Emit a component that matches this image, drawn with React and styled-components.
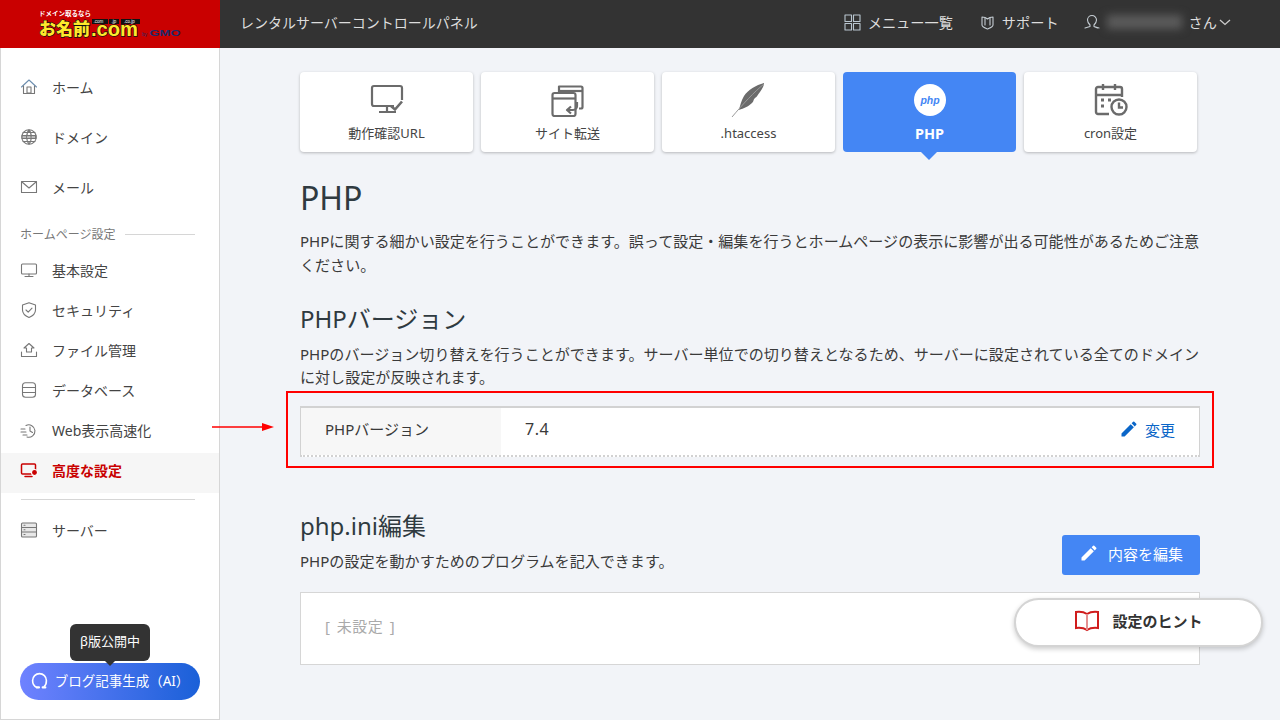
import React from "react";
import styled, { createGlobalStyle } from "styled-components";

const GlobalStyle = createGlobalStyle`
  html, body {
    margin: 0;
    padding: 0;
    height: 720px;
    overflow: hidden;
    background: #f2f4f8;
    color: #333;
    font-family: "Noto Sans", "Noto Sans CJK JP", sans-serif;
  }
  * { box-sizing: border-box; }
`;

const Page = styled.div`
  display: grid;
  grid-template-columns: 220px 1fr;
  grid-template-rows: 48px 672px;
  width: 1280px;
  height: 720px;
`;

const LogoBox = styled.div`
  background: #c90000;
`;

const Header = styled.header`
  display: flex;
  align-items: center;
  background: #333;
  color: #ddd;
  padding: 0 49px 0 20px;
`;

const HeaderTitle = styled.div`
  flex: 1;
  font-size: 14px;
  padding-bottom: 4px;
`;

const HeaderLink = styled.div`
  display: flex;
  align-items: center;
  gap: 7px;
  font-size: 14.2px;
  padding-bottom: 4px;
  margin-left: ${(p) => p.$gap || 0}px;
`;

const Blurred = styled.span`
  display: block;
  width: 75px;
  height: 14px;
  background: #5c5c5c;
  filter: blur(4px);
`;

const Chevron = styled.svg`
  margin-left: -5px;
`;

const Sidebar = styled.aside`
  position: relative;
  display: flex;
  flex-direction: column;
  background: #fff;
  border-left: 1px solid #d6d6d6;
  border-right: 1px solid #d6d6d6;
  border-bottom: 1px solid #d6d6d6;
  height: 672px;
  padding-top: 15px;
`;

const NavItem = styled.div`
  display: flex;
  align-items: center;
  gap: 14px;
  height: ${(p) => p.$h || 40}px;
  padding-left: 19px;
  padding-bottom: ${(p) => (p.$active ? 6 : 2)}px;
  margin-top: ${(p) => (p.$active ? 2 : 0)}px;
  font-size: 14px;
  color: ${(p) => (p.$active ? "#c90000" : "#444")};
  font-weight: ${(p) => (p.$active ? 700 : 400)};
  background: ${(p) => (p.$active ? "#f6f6f6" : "transparent")};
`;

const SectionLabel = styled.div`
  display: flex;
  align-items: center;
  gap: 10px;
  height: 20px;
  margin: 11px 24px 7px 19px;
  font-size: 12px;
  color: #777;
  &::after {
    content: "";
    flex: 1;
    height: 1px;
    background: #d6d6d6;
  }
`;

const Divider = styled.div`
  height: 1px;
  margin: 6px 24px 11px 20px;
  background: #d6d6d6;
`;

const SideFoot = styled.div`
  position: relative;
  margin: auto 19px 19px;
`;

const BlogButton = styled.div`
  display: flex;
  align-items: center;
  justify-content: center;
  gap: 7px;
  height: 37px;
  padding-bottom: 3px;
  border-radius: 19px;
  color: #fff;
  font-size: 13.5px;
  background: linear-gradient(90deg, #6f82ff, #1a60d8);
`;

const Tip = styled.div`
  position: absolute;
  left: 50px;
  top: -39px;
  width: 80px;
  height: 37px;
  padding-bottom: 4px;
  display: flex;
  align-items: center;
  justify-content: center;
  border-radius: 6px;
  background: #333;
  color: #fff;
  font-size: 13px;
  &::after {
    content: "";
    position: absolute;
    left: 34px;
    bottom: -5px;
    border: 6px solid transparent;
    border-bottom: 0;
    border-top-color: #333;
  }
`;

const Main = styled.main`
  position: relative;
  padding: 24px 80px 0;
  height: 672px;
`;

const Tabs = styled.div`
  display: flex;
  gap: 8px;
`;

const Tab = styled.div`
  position: relative;
  display: flex;
  flex-direction: column;
  align-items: center;
  width: 173px;
  height: 80px;
  padding-top: 11px;
  border-radius: 4px;
  font-size: ${(p) => (p.$active ? 14.5 : 13)}px;
  font-weight: ${(p) => (p.$active ? 700 : 400)};
  color: ${(p) => (p.$active ? "#fff" : "#444")};
  background: ${(p) => (p.$active ? "#4486f4" : "#fff")};
  box-shadow: ${(p) => (p.$active ? "none" : "0 1px 3px rgba(0, 0, 0, 0.25)")};
  ${(p) =>
    p.$active &&
    `&::after {
      content: "";
      position: absolute;
      left: 78px;
      bottom: -8px;
      border: 8px solid transparent;
      border-bottom: 0;
      border-top-color: #4486f4;
    }`}
`;

const TabIcon = styled.div`
  height: 34px;
  margin-bottom: 6px;
`;

const TabLabel = styled.div`
  line-height: 20px;
`;

const PageTitle = styled.h1`
  margin: 23px 0 0;
  font-size: 32px;
  line-height: 46px;
  font-weight: 400;
  color: #2f3a40;
`;

const Text = styled.p`
  margin: ${(p) => p.$top || 0}px 0 0;
  font-size: 15.05px;
  line-height: ${(p) => p.$lh || 24}px;
  color: #3a3a3a;
`;

const SubTitle = styled.h2`
  margin: ${(p) => p.$top || 0}px 0 0;
  font-size: 24px;
  line-height: 34px;
  font-weight: 400;
  color: #2f3a40;
`;

const Highlight = styled.div`
  margin: 2px -14px 0;
  padding: 13px 12px 9px;
  border: 2px solid #f00;
`;

const Arrow = styled.svg`
  position: absolute;
  left: -8px;
  top: 373px;
`;

const VersionTable = styled.div`
  display: grid;
  grid-template-columns: 200px 1fr auto;
  align-items: center;
  height: 51px;
  background: #fff;
  border: 1px solid #d2d2d2;
  border-top-width: 2px;
  border-bottom: 2px dotted #d2d2d2;
  font-size: 15px;
  color: #3a3a3a;
`;

const VersionHead = styled.div`
  display: flex;
  align-items: center;
  height: 100%;
  padding: 0 0 7px 24px;
  background: #f7f7f7;
`;

const VersionValue = styled.div`
  padding: 0 0 5px 24px;
  font-size: 16px;
  letter-spacing: 0.5px;
`;

const ChangeLink = styled.div`
  display: flex;
  align-items: center;
  gap: 6px;
  padding: 0 24px 5px 0;
  color: #0a66c8;
`;

const IniHead = styled.div`
  display: flex;
  justify-content: space-between;
  align-items: flex-end;
  margin-top: 41px;
`;

const EditButton = styled.div`
  display: flex;
  align-items: center;
  justify-content: center;
  gap: 9px;
  width: 138px;
  height: 40px;
  margin-bottom: -2px;
  padding-bottom: 4px;
  border-radius: 3px;
  background: #4486f4;
  color: #fff;
  font-size: 15px;
`;

const IniBox = styled.div`
  display: flex;
  align-items: center;
  height: 73px;
  margin-top: 19px;
  padding: 0 0 7px 24px;
  background: #fff;
  border: 1px solid #d6d6d6;
  font-size: 15px;
  letter-spacing: 0.5px;
  word-spacing: 2px;
  color: #aaa;
`;

const HintButton = styled.div`
  position: absolute;
  left: 794px;
  top: 550px;
  display: flex;
  align-items: center;
  justify-content: center;
  gap: 12px;
  width: 249px;
  height: 49px;
  padding-bottom: 4px;
  border-radius: 25px;
  background: #fff;
  border: 2px solid #d4d4d4;
  box-shadow: 0 2px 5px rgba(0, 0, 0, 0.2);
  font-size: 15px;
  font-weight: 700;
  color: #333;
`;

const Logo = () => (
  <svg width="220" height="48" viewBox="0 0 220 48">
    <text x="39" y="16" fontSize="6.500" fontWeight="700" fill="#fff" fontFamily="Noto Sans CJK JP">
      ドメイン取るなら
    </text>
    <text x="39" y="35" fontSize="17" fontWeight="900" fill="#ffe92b" stroke="#111" strokeWidth="1.300" paintOrder="stroke" fontFamily="Noto Sans CJK JP" textLength="51">
      お名前
    </text>
    <text x="91" y="36" fontSize="20" fontWeight="700" fill="#ffe92b" stroke="#111" strokeWidth="1.300" paintOrder="stroke" fontFamily="Liberation Sans" textLength="47" lengthAdjust="spacingAndGlyphs">
      .com
    </text>
    <rect x="92" y="19" width="16" height="5" fill="#111" />
    <rect x="109" y="19" width="10" height="5" fill="#111" />
    <rect x="121" y="19" width="19" height="5" fill="#111" />
    <text x="93.500" y="23" fontSize="4.500" fill="#fff" fontFamily="Liberation Sans">.com</text>
    <text x="111.500" y="23" fontSize="4.500" fill="#fff" fontFamily="Liberation Sans">.jp</text>
    <text x="124" y="23" fontSize="4.500" fill="#fff" fontFamily="Liberation Sans">.co.jp</text>
    <text x="142" y="36" fontSize="5" fill="#1b2a6b" fontFamily="Liberation Sans">by</text>
    <text x="149.500" y="36" fontSize="9" fontWeight="700" fill="#1b2a6b" fontFamily="Liberation Sans" textLength="31" lengthAdjust="spacingAndGlyphs">GMO</text>
  </svg>
);

const Ico = ({ size = 18, color = "#777", width = 1.1, children, view = 18 }) => (
  <svg
    width={size}
    height={size}
    viewBox={`0 0 ${view} ${view}`}
    fill="none"
    stroke={color}
    strokeWidth={width}
    strokeLinejoin="round"
    strokeLinecap="round"
  >
    {children}
  </svg>
);

const sideIcons = {
  home: (
    <>
      <path d="M1.500 9 9 2l7.500 7" stroke="#6d8fb0" />
      <path d="M3.500 8v7.500h11V8" />
      <rect x="7" y="9" width="4" height="6" />
    </>
  ),
  domain: (
    <>
      <circle cx="9" cy="9" r="7.200" />
      <path d="M3 4.500h12M3 13.500h12M9 2c-3 3-3 11 0 14M9 2c3 3 3 11 0 14" />
      <rect x="1.500" y="7" width="15" height="4" fill="#777" stroke="none" />
      <path d="M3 9h3M7.500 9h3M12 9h3" stroke="#fff" strokeDasharray="1 .6" />
    </>
  ),
  mail: (
    <>
      <rect x="1.500" y="3.500" width="15" height="11" />
      <path d="m2 4 7 6 7-6" />
    </>
  ),
  desktop: (
    <>
      <rect x="1.500" y="3" width="15" height="10" rx="1" />
      <path d="M9 13v2.500M5 15.500h8" />
    </>
  ),
  shield: (
    <>
      <path d="M9 1.800 15.500 4v5c0 3.800-3 6-6.500 7.400C5.500 15 2.500 12.800 2.500 9V4z" />
      <path d="m6 9 2.200 2.200L12 7.200" />
    </>
  ),
  upload: (
    <>
      <path d="M9 2.500 14 7h-2.500v4h-5V7H4z" />
      <path d="M1.500 11v4.500h15V11" />
    </>
  ),
  database: (
    <>
      <rect x="2.500" y="1.800" width="13" height="14.400" rx="3" />
      <path d="M2.500 6.500h13M2.500 11.500h13" />
    </>
  ),
  speed: (
    <>
      <path d="M6 4.500A6.200 6.200 0 1 1 7 16" />
      <path d="M10 6v4l2.500 1.500M1 8h4M1 11h5M3 14h4" />
    </>
  ),
  advanced: (
    <>
      <rect x="1.500" y="3" width="14" height="10" rx="1" strokeWidth="1.500" />
      <path d="M5 15.500h7" strokeWidth="1.500" />
      <circle cx="14.500" cy="11.500" r="3" fill="#c90000" stroke="#fff" />
    </>
  ),
  server: (
    <>
      <rect x="1.500" y="2" width="15" height="14" rx="1" fill="#e8e8e8" />
      <path d="M1.500 6.500h15M1.500 11h15M4 4.300h1M4 8.800h1M4 13.500h1" />
    </>
  ),
};

const SideItem = ({ icon, label, active, h }) => (
  <NavItem $active={active} $h={h}>
    <Ico color={active ? "#c90000" : "#777"}>{sideIcons[icon]}</Ico>
    {label}
  </NavItem>
);

const tabIcons = {
  url: (
    <svg width="36" height="34" viewBox="0 0 36 34" fill="none" stroke="#6b6b6b" strokeWidth="2.200">
      <path d="M25 23H5a2 2 0 0 1-2-2V5a2 2 0 0 1 2-2h26a2 2 0 0 1 2 2v12" />
      <path d="M18 23v5M10 29h17" />
      <path d="m22 23 4 3.500 7-8" strokeWidth="2.600" />
    </svg>
  ),
  redirect: (
    <svg width="36" height="34" viewBox="0 0 36 34" fill="none" stroke="#6b6b6b" strokeWidth="2.200" strokeLinejoin="round">
      <path d="M9 9V3.500h22a1.500 1.500 0 0 1 1.500 1.500v19a1.500 1.500 0 0 1-1.500 1.500h-2" />
      <path d="M9 8h23" />
      <rect x="2.500" y="10" width="23" height="23" rx="2" />
      <path d="M2.500 15.500h23" />
      <path d="M27 19v4a4 4 0 0 1-4 4h-5M21 23.500 17 27l4 3.500" />
    </svg>
  ),
  feather: (
    <svg width="36" height="34" viewBox="0 0 36 34">
      <path d="M33 0c-8 2-16 7-20 13-3 5-4 10-5 14 5-2 9-3 13-7 2-2 1-3 3-5 2-1 3-4 5-6 2-3 4-6 4-9z" fill="#6b6b6b" />
      <path d="M33 1C23 9 12 21 1 34" stroke="#9a9a9a" strokeWidth="1" fill="none" />
    </svg>
  ),
  php: (
    <svg width="36" height="34" viewBox="0 0 36 34">
      <circle cx="18" cy="17" r="16" fill="#fff" />
      <text x="18" y="20.500" textAnchor="middle" fontSize="10.500" fontStyle="italic" fontWeight="700" fill="#4486f4" fontFamily="Liberation Sans">
        php
      </text>
    </svg>
  ),
  cron: (
    <svg width="36" height="34" viewBox="0 0 36 34" fill="none" stroke="#6b6b6b" strokeWidth="2.400">
      <path d="M16 31H5a2 2 0 0 1-2-2V6a2 2 0 0 1 2-2h22a2 2 0 0 1 2 2v8" />
      <path d="M3 12h26M10 1v6M22 1v6" />
      <path d="M8 17h3M15 17h3M8 23h3" strokeWidth="3" />
      <circle cx="26" cy="24" r="7.500" />
      <path d="M26 19.500V24.500h4" />
    </svg>
  ),
};

const Pencil = ({ color, size = 18 }) => (
  <svg width={size} height={size} viewBox="0 0 24 24" fill={color}>
    <path d="M3 17.250V21h3.750L17.810 9.940l-3.750-3.750L3 17.250zM20.710 7.040a1 1 0 0 0 0-1.410l-2.340-2.340a1 1 0 0 0-1.410 0l-1.830 1.830 3.750 3.750 1.830-1.830z" />
  </svg>
);

const App = () => (
  <Page>
    <GlobalStyle />
    <LogoBox>
      <Logo />
    </LogoBox>
    <Header>
      <HeaderTitle>レンタルサーバーコントロールパネル</HeaderTitle>
      <HeaderLink>
        <Ico size={17} color="#b9c6d0" view={17}>
          <rect x="1" y="1" width="6.500" height="6.500" />
          <rect x="9.500" y="1" width="6.500" height="6.500" />
          <rect x="1" y="9.500" width="6.500" height="6.500" />
          <rect x="9.500" y="9.500" width="6.500" height="6.500" />
        </Ico>
        メニュー一覧
      </HeaderLink>
      <HeaderLink $gap={27}>
        <Ico size={15} color="#c5cdd3" view={15}>
          <path d="M2 2c2 0 4 .5 5.500 2C9 2.500 11 2 13 2v8c0 2-3 3-5.500 4C5 13 2 12 2 10z" />
          <path d="M5 3v7M10 3v7" />
        </Ico>
        サポート
      </HeaderLink>
      <HeaderLink $gap={25}>
        <Ico size={16} color="#c5cdd3" view={16}>
          <path d="M6 11C4 9 3.500 7.500 3.500 6a4.500 4.500 0 0 1 9 0c0 1.500-.5 3-2.500 5v1.500l3.500 1.500M6 11v1.500L1 14M10 12.500 15 14" />
        </Ico>
        <Blurred />
        <span>さん</span>
        <Chevron width="12" height="7" viewBox="0 0 12 7" fill="none" stroke="#ccc" strokeWidth="1.300">
          <path d="m1 1 5 4.500L11 1" />
        </Chevron>
      </HeaderLink>
    </Header>

    <Sidebar>
      <SideItem icon="home" label="ホーム" h={50} />
      <SideItem icon="domain" label="ドメイン" h={50} />
      <SideItem icon="mail" label="メール" h={50} />
      <SectionLabel>ホームページ設定</SectionLabel>
      <SideItem icon="desktop" label="基本設定" />
      <SideItem icon="shield" label="セキュリティ" />
      <SideItem icon="upload" label="ファイル管理" />
      <SideItem icon="database" label="データベース" />
      <SideItem icon="speed" label="Web表示高速化" />
      <SideItem icon="advanced" label="高度な設定" active />
      <Divider />
      <SideItem icon="server" label="サーバー" />
      <SideFoot>
        <Tip>β版公開中</Tip>
        <BlogButton>
          <Ico size={17} color="#fff" view={16} width={1.500}>
            <path d="M5.500 14.500C3 13.500 1.500 11 1.500 8a6.500 6.500 0 0 1 13 0c0 2.500-.7 4.500-2 5.500" />
            <path d="M5.500 14.500h2M11 14.500h2.500" strokeWidth="2" />
          </Ico>
          ブログ記事生成（AI）
        </BlogButton>
      </SideFoot>
    </Sidebar>

    <Main>
      <Tabs>
        <Tab>
          <TabIcon>{tabIcons.url}</TabIcon>
          <TabLabel>動作確認URL</TabLabel>
        </Tab>
        <Tab>
          <TabIcon>{tabIcons.redirect}</TabIcon>
          <TabLabel>サイト転送</TabLabel>
        </Tab>
        <Tab>
          <TabIcon>{tabIcons.feather}</TabIcon>
          <TabLabel>.htaccess</TabLabel>
        </Tab>
        <Tab $active>
          <TabIcon>{tabIcons.php}</TabIcon>
          <TabLabel>PHP</TabLabel>
        </Tab>
        <Tab>
          <TabIcon>{tabIcons.cron}</TabIcon>
          <TabLabel>cron設定</TabLabel>
        </Tab>
      </Tabs>

      <PageTitle>PHP</PageTitle>
      <Text $top={8}>
        PHPに関する細かい設定を行うことができます。誤って設定・編集を行うとホームページの表示に影響が出る可能性があるためご注意ください。
      </Text>

      <SubTitle $top={25}>PHPバージョン</SubTitle>
      <Text $top={7} $lh={23}>
        PHPのバージョン切り替えを行うことができます。サーバー単位での切り替えとなるため、サーバーに設定されている全てのドメインに対し設定が反映されます。
      </Text>

      <Highlight>
        <VersionTable>
          <VersionHead>PHPバージョン</VersionHead>
          <VersionValue>7.4</VersionValue>
          <ChangeLink>
            <Pencil color="#0a66c8" size={20} />
            変更
          </ChangeLink>
        </VersionTable>
      </Highlight>

      <Arrow width="64" height="12" viewBox="0 0 64 12">
        <path d="M0 6h50" stroke="#f00" strokeWidth="1.500" />
        <path d="M50 2l12 4-12 4z" fill="#f00" />
      </Arrow>

      <IniHead>
        <div>
          <SubTitle>php.ini編集</SubTitle>
          <Text $top={6}>PHPの設定を動かすためのプログラムを記入できます。</Text>
        </div>
        <EditButton>
          <Pencil color="#fff" size={20} />
          内容を編集
        </EditButton>
      </IniHead>

      <IniBox>[ 未設定 ]</IniBox>

      <HintButton>
        <svg width="26" height="24" viewBox="0 0 26 24" fill="none" stroke="#d01c1c" strokeWidth="2">
          <path d="M13 5C10 3 6 2.500 2 3v16c4-.5 8 0 11 2 3-2 7-2.500 11-2V3c-4-.5-8 0-11 2z" />
          <path d="M13 5v16" stroke="#e59090" />
        </svg>
        設定のヒント
      </HintButton>
    </Main>
  </Page>
);

export default App;
